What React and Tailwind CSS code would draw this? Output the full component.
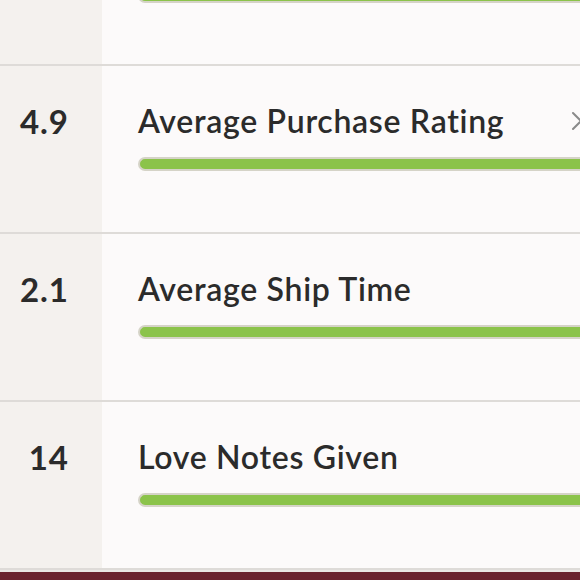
import { ChevronRight } from 'lucide-react'

const stats = [
  { value: '', label: '', hidden: true },
  { value: '4.9', label: 'Average Purchase Rating', chevron: true },
  { value: '2.1', label: 'Average Ship Time' },
  { value: '14', label: 'Love Notes Given' },
]

function StatRow({ stat }) {
  return (
    <div className="flex h-[168px] border-b-2 border-[#dedbd8]">
      <div className="w-[102px] shrink-0 bg-[#f4f1ee] pr-[33px] pt-[35px] text-right text-[33px] leading-[40px] font-bold tracking-[1px] text-[#2b2b2b]">
        {stat.value}
      </div>
      <div className="flex-1 bg-[#fcfafa] pl-[36px] pt-[35px]">
        <div className="flex items-center justify-between h-[40px]">
          <span className="text-[32px] font-semibold tracking-[0.7px] text-[#2b2b2b] leading-[40px]">{stat.label}</span>
          {stat.chevron && <ChevronRight className="w-8 h-8 text-[#8a8a8a] -mr-[13px]" strokeWidth={1.5} />}
        </div>
        <div className="mt-[16px] h-[14px] rounded-l-full border-2 border-r-0 border-[#d5d3c7] bg-[#8bc34a]" />
      </div>
    </div>
  )
}

export default function App() {
  return (
    <div className="w-[580px] h-[580px] overflow-hidden bg-[#fcfafa]" style={{ fontFamily: 'Lato, "Open Sans", sans-serif' }}>
      <div className="-mt-[102px]">
        {stats.map((s, i) => <StatRow key={i} stat={s} />)}
      </div>
      <div className="h-[2px] bg-[#ebe9e6]" />
      <div className="h-[20px] bg-[#6b2430]" />
    </div>
  )
}
